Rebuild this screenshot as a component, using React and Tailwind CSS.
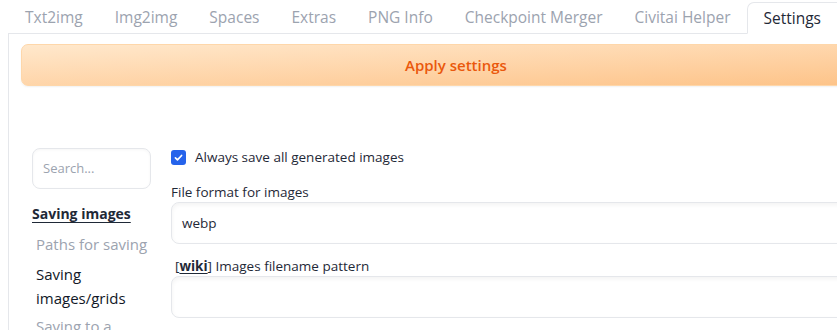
import React from "react";

const tabs = [
  "Txt2img",
  "Img2img",
  "Spaces",
  "Extras",
  "PNG Info",
  "Checkpoint Merger",
  "Civitai Helper",
];

const SideItem = ({ children, className }) => (
  <div className={"pl-[4px] text-[15px] leading-[24px] " + className}>{children}</div>
);

export default function App() {
  return (
    <div
      className="w-[837px] h-[330px] overflow-hidden bg-white pl-[8px]"
      style={{ fontFamily: "'Open Sans', 'Noto Sans', sans-serif" }}
    >
      <div className="ml-[1px] flex h-[33px] pt-[2px] text-[15.5px] whitespace-nowrap">
        {tabs.map((t) => (
          <div key={t} className="shrink-0 px-[16px] leading-[31px] text-[#9ca3af]">
            {t}
          </div>
        ))}
        <div className="relative z-10 -mb-px h-[32px] shrink-0 rounded-tl-[7px] border border-b-white border-r-0 border-[#e5e7eb] bg-white pl-[16px] pr-[16px] leading-[30px] text-[#1f2937]">
          Settings
        </div>
      </div>

      <div className="w-[900px] border-l border-t border-[#e5e7eb] pl-[12px] pt-[10px]">
        <button className="flex h-[42px] w-[900px] items-center rounded-[7px] border border-[#fed7aa] bg-gradient-to-br from-[#ffe8cc] to-[#fdc286] shadow-[0_1px_2px_rgba(0,0,0,0.06)]">
          <span className="ml-[383px] text-[15px] font-semibold text-[#ea580c]">
            Apply settings
          </span>
        </button>

        <div className="mt-[62px] flex">
          <div className="ml-[11px] w-[119px] shrink-0">
            <div className="flex h-[41px] items-center rounded-[8px] border border-[#e5e7eb] pl-[10px] text-[13px] text-[#9ca3af] shadow-[inset_0_1px_3px_rgba(0,0,0,0.04)]">
              Search...
            </div>
            <div className="mt-[14px] text-[14px] font-bold leading-[22px] text-[#1f2937] underline underline-offset-[3px]">
              Saving images
            </div>
            <SideItem className="mt-[7px] text-[#9ca3af]">Paths for saving</SideItem>
            <SideItem className="mt-[6px] text-[#111827]">
              Saving
              <br />
              images/grids
            </SideItem>
            <SideItem className="mt-[4px] text-[#9ca3af]">Saving to a directory</SideItem>
          </div>

          <div className="ml-[20px] flex-1 text-[13.5px] text-[#1f2937]">
            <label className="flex h-[18px] items-center gap-[9px]">
              <span className="flex h-[15px] w-[15px] items-center justify-center rounded-[3px] bg-[#2563eb]">
                <svg width="11" height="11" viewBox="0 0 16 16" fill="none">
                  <path
                    d="M3.5 8.5l3 3 6-6.5"
                    stroke="white"
                    strokeWidth="2.4"
                    strokeLinecap="round"
                    strokeLinejoin="round"
                  />
                </svg>
              </span>
              <span>Always save all generated images</span>
            </label>

            <div className="mt-[17px] leading-[18px]">File format for images</div>
            <div className="mt-[1px] flex h-[42px] items-center rounded-[8px] border border-[#e5e7eb] pl-[10px] shadow-[inset_0_2px_4px_rgba(0,0,0,0.05)]">
              webp
            </div>

            <div className="mt-[14px] pl-[4px] leading-[16px]">
              [<span className="font-bold underline underline-offset-2">wiki</span>] Images filename pattern
            </div>
            <div className="mt-[2px] h-[42px] rounded-[8px] border border-[#e5e7eb] shadow-[inset_0_2px_4px_rgba(0,0,0,0.05)]" />
          </div>
        </div>
      </div>
    </div>
  );
}
